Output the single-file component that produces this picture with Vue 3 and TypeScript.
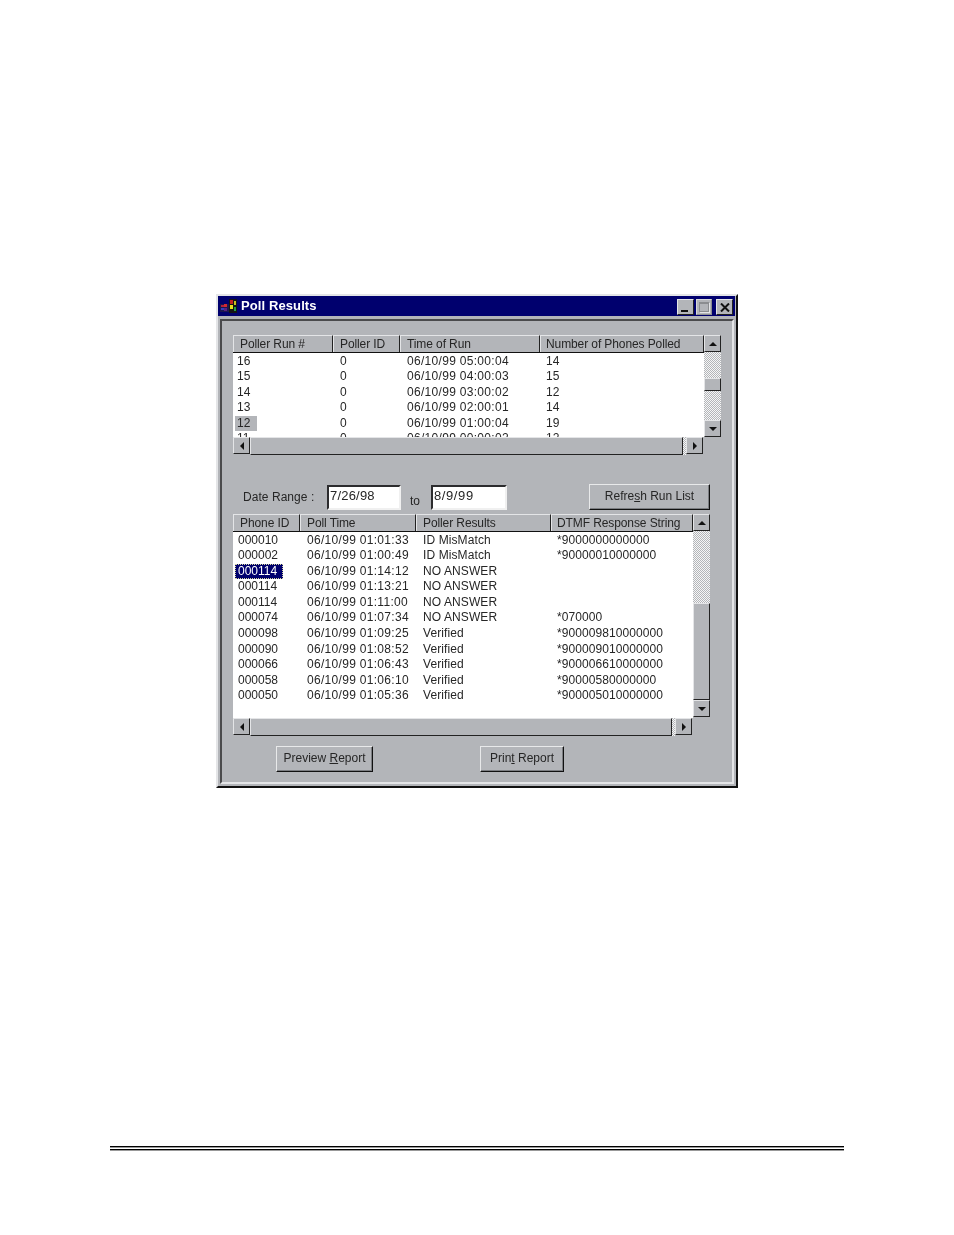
<script setup lang="ts">
const runs: string[][] = [
  ['16', '0', '06/10/99 05:00:04', '14'],
  ['15', '0', '06/10/99 04:00:03', '15'],
  ['14', '0', '06/10/99 03:00:02', '12'],
  ['13', '0', '06/10/99 02:00:01', '14'],
  ['12', '0', '06/10/99 01:00:04', '19'],
  ['11', '0', '06/10/99 00:00:02', '12'],
]
const results: string[][] = [
  ['000010', '06/10/99 01:01:33', 'ID MisMatch', '*9000000000000'],
  ['000002', '06/10/99 01:00:49', 'ID MisMatch', '*90000010000000'],
  ['000114', '06/10/99 01:14:12', 'NO ANSWER', ''],
  ['000114', '06/10/99 01:13:21', 'NO ANSWER', ''],
  ['000114', '06/10/99 01:11:00', 'NO ANSWER', ''],
  ['000074', '06/10/99 01:07:34', 'NO ANSWER', '*070000'],
  ['000098', '06/10/99 01:09:25', 'Verified', '*900009810000000'],
  ['000090', '06/10/99 01:08:52', 'Verified', '*900009010000000'],
  ['000066', '06/10/99 01:06:43', 'Verified', '*900006610000000'],
  ['000058', '06/10/99 01:06:10', 'Verified', '*90000580000000'],
  ['000050', '06/10/99 01:05:36', 'Verified', '*900005010000000'],
]
const runHeads = ['Poller Run #', 'Poller ID', 'Time of Run', 'Number of Phones Polled']
const resultHeads = ['Phone ID', 'Poll Time', 'Poller Results', 'DTMF Response String']
</script>

<template>
  <div class="page">
    <div class="window">
      <div class="titlebar">
        <svg class="appicon" width="18" height="16" viewBox="0 0 18 16">
          <rect x="1" y="6" width="9" height="8" fill="#1c1650" />
          <rect x="2" y="7" width="3" height="2" fill="#b02040" />
          <rect x="5" y="6" width="3" height="3" fill="#d02a30" />
          <rect x="2" y="10" width="3" height="2" fill="#3040c0" />
          <rect x="5" y="10" width="3" height="3" fill="#5a2080" />
          <rect x="10" y="1" width="8" height="14" fill="#141414" />
          <rect x="11" y="2" width="3" height="4" fill="#c02020" />
          <rect x="15" y="3" width="2" height="4" fill="#c8c020" />
          <rect x="11" y="7" width="3" height="4" fill="#e8e020" />
          <rect x="15" y="9" width="2" height="4" fill="#20a040" />
        </svg>
        <span class="title">Poll Results</span>
        <div class="wbtns">
          <button class="wbtn"><i class="min"></i></button>
          <button class="wbtn wmax"><i class="max"></i></button>
          <button class="wbtn close">
            <svg width="10" height="9" viewBox="0 0 10 9"><path d="M1 0.5 L9 8.5 M9 0.5 L1 8.5" stroke="#111" stroke-width="2" /></svg>
          </button>
        </div>
      </div>

      <div class="client">
        <section class="list list-runs">
          <div class="main">
            <div class="head cols-runs">
              <div v-for="h in runHeads" :key="h" class="hcell">{{ h }}</div>
            </div>
            <div class="body">
              <div v-for="(r, i) in runs" :key="r[0]" class="row cols-runs">
                <div class="cell first"><span class="mark" :class="{ gray: i === 4 }">{{ r[0] }}</span></div>
                <div class="cell">{{ r[1] }}</div>
                <div class="cell">{{ r[2] }}</div>
                <div class="cell">{{ r[3] }}</div>
              </div>
            </div>
          </div>
          <div class="vbar">
            <div class="sbtn"><i class="arrow up"></i></div>
            <div class="track t1"></div>
            <div class="thumb th1"></div>
            <div class="track t2"></div>
            <div class="sbtn"><i class="arrow down"></i></div>
          </div>
          <div class="hbar">
            <div class="sbtn"><i class="arrow left"></i></div>
            <div class="hthumb"></div>
            <div class="htrack"></div>
            <div class="sbtn"><i class="arrow right"></i></div>
          </div>
        </section>

        <div class="daterow">
          <span class="lbl">Date Range :</span>
          <div class="field f1">7/26/98</div>
          <span class="to">to</span>
          <div class="field f2">8/9/99</div>
          <button class="btn refresh">Refre<u>s</u>h Run List</button>
        </div>

        <section class="list list-results">
          <div class="main">
            <div class="head cols-results">
              <div v-for="h in resultHeads" :key="h" class="hcell">{{ h }}</div>
            </div>
            <div class="body">
              <div v-for="(r, i) in results" :key="i" class="row cols-results">
                <div class="cell first"><span class="mark" :class="{ sel: i === 2 }">{{ r[0] }}</span></div>
                <div class="cell">{{ r[1] }}</div>
                <div class="cell">{{ r[2] }}</div>
                <div class="cell">{{ r[3] }}</div>
              </div>
            </div>
          </div>
          <div class="vbar">
            <div class="sbtn"><i class="arrow up"></i></div>
            <div class="track t3"></div>
            <div class="thumb th2"></div>
            <div class="sbtn"><i class="arrow down"></i></div>
          </div>
          <div class="hbar">
            <div class="sbtn"><i class="arrow left"></i></div>
            <div class="hthumb"></div>
            <div class="htrack"></div>
            <div class="sbtn"><i class="arrow right"></i></div>
          </div>
        </section>

        <div class="actions">
          <button class="btn preview">Preview <u>R</u>eport</button>
          <button class="btn print">Prin<u>t</u> Report</button>
        </div>
      </div>
    </div>

    <footer class="rule"></footer>
  </div>
</template>

<style scoped>
.page {
  position: relative;
  width: 954px;
  height: 1235px;
  box-sizing: border-box;
  padding: 294px 0 0 216px;
  background: #fff;
  font: 12px/15.6px "Liberation Sans", Arial, sans-serif;
  color: #262626;
  overflow: hidden;
}
.window {
  width: 522px;
  height: 494px;
  box-sizing: border-box;
  border: 2px solid;
  border-color: #e4e5e7 #111 #111 #e4e5e7;
  background: #b3b5b9;
  filter: blur(0.5px);
}
.titlebar {
  height: 20px;
  margin-right: 1px;
  background: #00006e;
  display: flex;
  align-items: center;
  color: #fff;
}
.appicon { margin-left: 1px; }
.title {
  margin-left: 4px;
  font-weight: bold;
  font-size: 13px;
  letter-spacing: 0.1px;
}
.wbtns { margin-left: auto; margin-right: 2px; display: flex; align-self: flex-end; margin-bottom: 1px; }
.wbtn {
  width: 17px;
  height: 16px;
  padding: 0;
  box-sizing: border-box;
  border: 1px solid;
  border-color: #e4e5e7 #222 #222 #e4e5e7;
  background: #b3b5b9;
  position: relative;
  display: flex;
  align-items: center;
  justify-content: center;
}
.wbtn.wmax { width: 16px; margin-left: 2px; border-color: #d8d9db #8b8d90 #8b8d90 #d8d9db; }
.wbtn.close { margin-left: 4px; }
.min { position: absolute; left: 3px; bottom: 2px; width: 7px; height: 2px; background: #111; }
.max { width: 10px; height: 10px; box-sizing: border-box; border: 1px solid #8b8d90; border-top-width: 2px; box-shadow: 1px 1px 0 #e4e5e7; }
.client {
  margin: 3px 2px 0 2px;
  height: 465px;
  box-sizing: border-box;
  border: 2px solid;
  border-color: #4a4a4c #e4e5e7 #e4e5e7 #4a4a4c;
  padding: 14px 0 0 11px;
}
.list {
  display: grid;
  grid-template-rows: auto 18px;
}
.list-runs { width: 488px; grid-template-columns: 471px 17px; }
.list-results { width: 477px; grid-template-columns: 460px 17px; margin-top: 4px; }
.main { background: #fff; min-width: 0; }
.head { height: 18px; box-sizing: border-box; border-bottom: 1px solid #111; }
.cols-runs { display: grid; grid-template-columns: 100px 67px 140px 164px; }
.cols-results { display: grid; grid-template-columns: 67px 116px 135px 142px; }
.hcell {
  background: #b3b5b9;
  border-top: 1px solid #e4e5e7;
  border-left: 1px solid #e4e5e7;
  border-right: 1px solid #222;
  padding: 0 0 0 6px;
  line-height: 16px;
  white-space: nowrap;
  overflow: hidden;
  letter-spacing: -0.1px;
}
.hcell:last-child { padding-left: 5px; }
.list-runs .body { height: 84px; }
.list-results .body { height: 186px; }
.body { overflow: hidden; background: #fff; padding-top: 0.5px; box-sizing: border-box; }
.row { height: 15.6px; white-space: nowrap; }
.cell { padding-left: 7px; }
.cols-results .cell:last-child, .cols-runs .cell:last-child { padding-left: 6px; }
.cols-runs .cell:nth-child(3), .cols-results .cell:nth-child(2) { letter-spacing: 0.3px; }
.cols-results .cell:nth-child(3) { letter-spacing: 0.1px; }
.cols-results .cell:last-child { letter-spacing: 0.07px; }
.cell.first { padding-left: 2px; }
.mark { display: inline-block; padding: 0 2px; }
.list-results .mark { padding: 0 6px 0 3px; }
.mark.gray { width: 22px; box-sizing: border-box; background: #b3b5b9; }
.mark.sel { background: #00006e; color: #fff; outline: 1px dotted #d8d8a0; outline-offset: -1px; }
.vbar { display: flex; flex-direction: column; }
.sbtn {
  flex: none;
  width: 17px;
  height: 17px;
  box-sizing: border-box;
  border: 1px solid;
  border-color: #e4e5e7 #222 #222 #e4e5e7;
  background: #b3b5b9;
  display: flex;
  align-items: center;
  justify-content: center;
}
.track { background: repeating-conic-gradient(#f6f6f6 0 25%, #b3b5b9 0 50%) 0 0 / 2px 2px; }
.t1 { height: 26px; }
.t2 { height: 29px; }
.t3 { height: 72px; }
.thumb {
  box-sizing: border-box;
  border: 1px solid;
  border-color: #e4e5e7 #222 #222 #e4e5e7;
  background: #b3b5b9;
}
.th1 { height: 13px; }
.th2 { height: 97px; }
.hbar { display: flex; grid-column: 1; margin-right: 1px; }
.hthumb {
  flex: 1;
  box-sizing: border-box;
  border: 1px solid;
  border-color: #e4e5e7 #222 #222 #e4e5e7;
  background: #b3b5b9;
}
.htrack { width: 3px; background: repeating-conic-gradient(#f6f6f6 0 25%, #b3b5b9 0 50%) 0 0 / 2px 2px; }
.arrow { width: 0; height: 0; display: block; border: 4px solid transparent; }
.arrow.up { border-top-width: 0; border-bottom-color: #111; }
.arrow.down { border-bottom-width: 0; border-top-color: #111; }
.arrow.left { border-left-width: 0; border-right-color: #111; }
.arrow.right { border-right-width: 0; border-left-color: #111; }
.daterow {
  width: 477px;
  height: 26px;
  margin-top: 29px;
  display: flex;
  align-items: center;
}
.lbl { margin-left: 10px; width: 84px; margin-top: 2px; letter-spacing: 0.05px; }
.field {
  height: 25px;
  box-sizing: border-box;
  background: #fff;
  border: 2px solid;
  border-color: #2c2c2e #f0f0f0 #f0f0f0 #2c2c2e;
  padding: 1px 0 0 1px;
  font-size: 13px;
}
.f1 { width: 74px; letter-spacing: 0.2px; }
.f2 { width: 76px; letter-spacing: 0.6px; }
.to { width: 30px; padding-left: 9px; box-sizing: border-box; margin-top: 10px; }
.btn {
  font: inherit;
  color: inherit;
  padding: 0;
  height: 26px;
  box-sizing: border-box;
  background: #b3b5b9;
  border: 1px solid;
  border-color: #e8e9ea #111 #111 #e8e9ea;
  box-shadow: inset -1px -1px 0 #7c7e82;
}
.refresh { width: 121px; margin-left: auto; }
.actions { display: flex; margin: 10px 0 0 43px; }
.preview { width: 97px; }
.print { width: 84px; margin-left: 107px; }
.rule {
  position: absolute;
  left: 110px;
  top: 1146px;
  width: 734px;
  height: 5px;
  background: linear-gradient(#000 0 1px, #999 1px 2px, #fff 2px 3px, #000 3px 4px, #999 4px 5px);
}
</style>
